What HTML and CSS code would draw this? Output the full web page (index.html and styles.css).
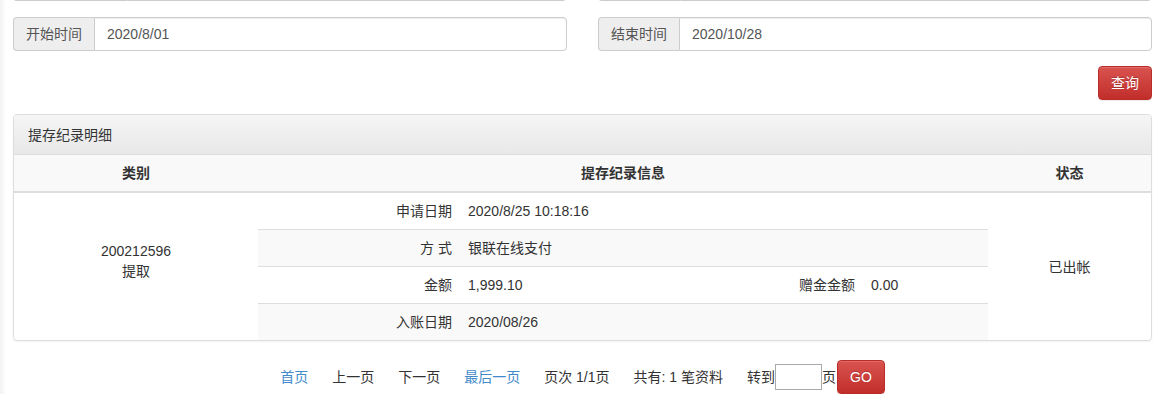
FILE: index.html
```html
<!DOCTYPE html>
<html lang="zh-CN">
<head>
    <meta charset="UTF-8">
    <title>提存纪录</title>
    <link rel="stylesheet" href="styles.css">
</head>
<body>
    <div class="page">
        <!-- search filters (upper row scrolled mostly out of view) -->
        <div class="filter-row filter-row-prev">
            <div class="input-group">
                <span class="addon addon-wide"></span>
                <input class="form-control" type="text" value="">
            </div>
            <div class="input-group">
                <span class="addon addon-blank"></span>
                <input class="form-control" type="text" value="">
            </div>
        </div>

        <div class="filter-row">
            <div class="input-group">
                <span class="addon">开始时间</span>
                <input class="form-control" type="text" value="2020/8/01">
            </div>
            <div class="input-group">
                <span class="addon">结束时间</span>
                <input class="form-control" type="text" value="2020/10/28">
            </div>
        </div>

        <div class="actions">
            <button class="btn btn-danger" type="button">查询</button>
        </div>

        <div class="panel">
            <div class="panel-heading">提存纪录明细</div>
            <table class="record-table">
                <colgroup>
                    <col style="width: 244px">
                    <col>
                    <col style="width: 163px">
                </colgroup>
                <thead>
                    <tr>
                        <th>类别</th>
                        <th>提存纪录信息</th>
                        <th>状态</th>
                    </tr>
                </thead>
                <tbody>
                    <tr>
                        <td class="cell-center cell-type">200212596<br>提取</td>
                        <td class="cell-detail">
                            <table class="detail-table">
                                <colgroup>
                                    <col style="width: 202px">
                                    <col style="width: 250px">
                                    <col style="width: 153px">
                                    <col>
                                </colgroup>
                                <tr>
                                    <td class="label">申请日期</td>
                                    <td colspan="3">2020/8/25 10:18:16</td>
                                </tr>
                                <tr>
                                    <td class="label">方 式</td>
                                    <td colspan="3">银联在线支付</td>
                                </tr>
                                <tr>
                                    <td class="label">金额</td>
                                    <td>1,999.10</td>
                                    <td class="label">赠金金额</td>
                                    <td>0.00</td>
                                </tr>
                                <tr>
                                    <td class="label">入账日期</td>
                                    <td colspan="3">2020/08/26</td>
                                </tr>
                            </table>
                        </td>
                        <td class="cell-center">已出帐</td>
                    </tr>
                </tbody>
            </table>
        </div>

        <!-- pager -->
        <div class="pager">
            <a class="pager-link" href="#">首页</a>
            <span class="pager-item">上一页</span>
            <span class="pager-item">下一页</span>
            <a class="pager-link" href="#">最后一页</a>
            <span class="pager-item">页次 1/1页</span>
            <span class="pager-item">共有: 1 笔资料</span>
            <span class="pager-jump">
                转到<input class="jump-input" type="text">页
                <button class="btn btn-danger btn-go" type="button">GO</button>
            </span>
        </div>
    </div>
</body>
</html>
```

FILE: styles.css
```css
* {
    margin: 0;
    padding: 0;
    box-sizing: border-box;
}

body {
    font-family: 'Liberation Sans', 'Noto Sans CJK SC', sans-serif;
    font-size: 14px;
    line-height: 20px;
    color: #333;
    background: linear-gradient(to right, #f2f2f2 0, #fff 6px) no-repeat, #fff;
    overflow: hidden;
}

.page {
    padding: 0 13px;
}

.filter-row {
    display: grid;
    grid-template-columns: 1fr 1fr;
    column-gap: 31px;
    margin-bottom: 15px;
}

.filter-row-prev {
    margin-top: -33px;
    margin-bottom: 16px;
}

.input-group {
    display: flex;
    height: 34px;
}

.addon {
    display: flex;
    align-items: center;
    padding: 6px 12px;
    background: #eee;
    color: #555;
    border: 1px solid #ccc;
    border-right: none;
    border-radius: 4px 0 0 4px;
    white-space: nowrap;
}

.addon-wide {
    width: 114px;
}

.addon-blank {
    width: 82px;
}

.form-control {
    flex: 1;
    min-width: 0;
    padding: 6px 12px;
    font: inherit;
    color: #555;
    border: 1px solid #ccc;
    border-radius: 0 4px 4px 0;
    box-shadow: inset 0 1px 1px rgba(0, 0, 0, 0.075);
    outline: none;
}

.actions {
    display: flex;
    justify-content: flex-end;
    margin-bottom: 14px;
}

.btn {
    font: inherit;
    color: #fff;
    padding: 6px 12px;
    height: 34px;
    border-radius: 4px;
    cursor: pointer;
}

.btn-danger {
    background: linear-gradient(to bottom, #d9534f 0, #c12e2a 100%);
    border: 1px solid #b92c28;
    text-shadow: 0 -1px 0 rgba(0, 0, 0, 0.2);
    box-shadow: inset 0 1px 0 rgba(255, 255, 255, 0.15), 0 1px 1px rgba(0, 0, 0, 0.075);
}

.panel {
    border: 1px solid #ddd;
    border-radius: 4px;
    box-shadow: 0 1px 2px rgba(0, 0, 0, 0.05);
    margin-bottom: 19px;
    overflow: hidden;
}

.panel-heading {
    padding: 10px 14px 9px;
    background: linear-gradient(to bottom, #f5f5f5 0, #e8e8e8 100%);
    border-bottom: 1px solid #ddd;
}

.record-table {
    width: 100%;
    border-collapse: collapse;
    table-layout: fixed;
}

.record-table th {
    padding: 8px;
    background: #f9f9f9;
    font-weight: bold;
    text-align: center;
    border-bottom: 2px solid #ddd;
}

.cell-center {
    text-align: center;
    vertical-align: middle;
    padding: 8px;
}

.cell-type {
    padding-bottom: 19px;
}

.cell-detail {
    padding: 0;
}

.detail-table {
    width: 100%;
    border-collapse: collapse;
    table-layout: fixed;
}

.detail-table td {
    padding: 8px;
    text-align: left;
    border-top: 1px solid #ddd;
}

.detail-table tr:first-child td {
    border-top: none;
}

.detail-table tr:nth-child(even) td {
    background: #f9f9f9;
}

.detail-table .label {
    text-align: right;
}

.pager {
    display: flex;
    justify-content: center;
    align-items: center;
    gap: 24px;
    height: 34px;
}

.pager-link {
    color: #428bca;
    text-decoration: none;
}

.pager-jump {
    display: flex;
    align-items: center;
}

.jump-input {
    width: 47px;
    height: 26px;
    border: 1px solid #aaa;
    font: inherit;
    padding: 0 4px;
    outline: none;
}

.btn-go {
    margin-left: 1px;
    padding: 6px 12px;
}
```
